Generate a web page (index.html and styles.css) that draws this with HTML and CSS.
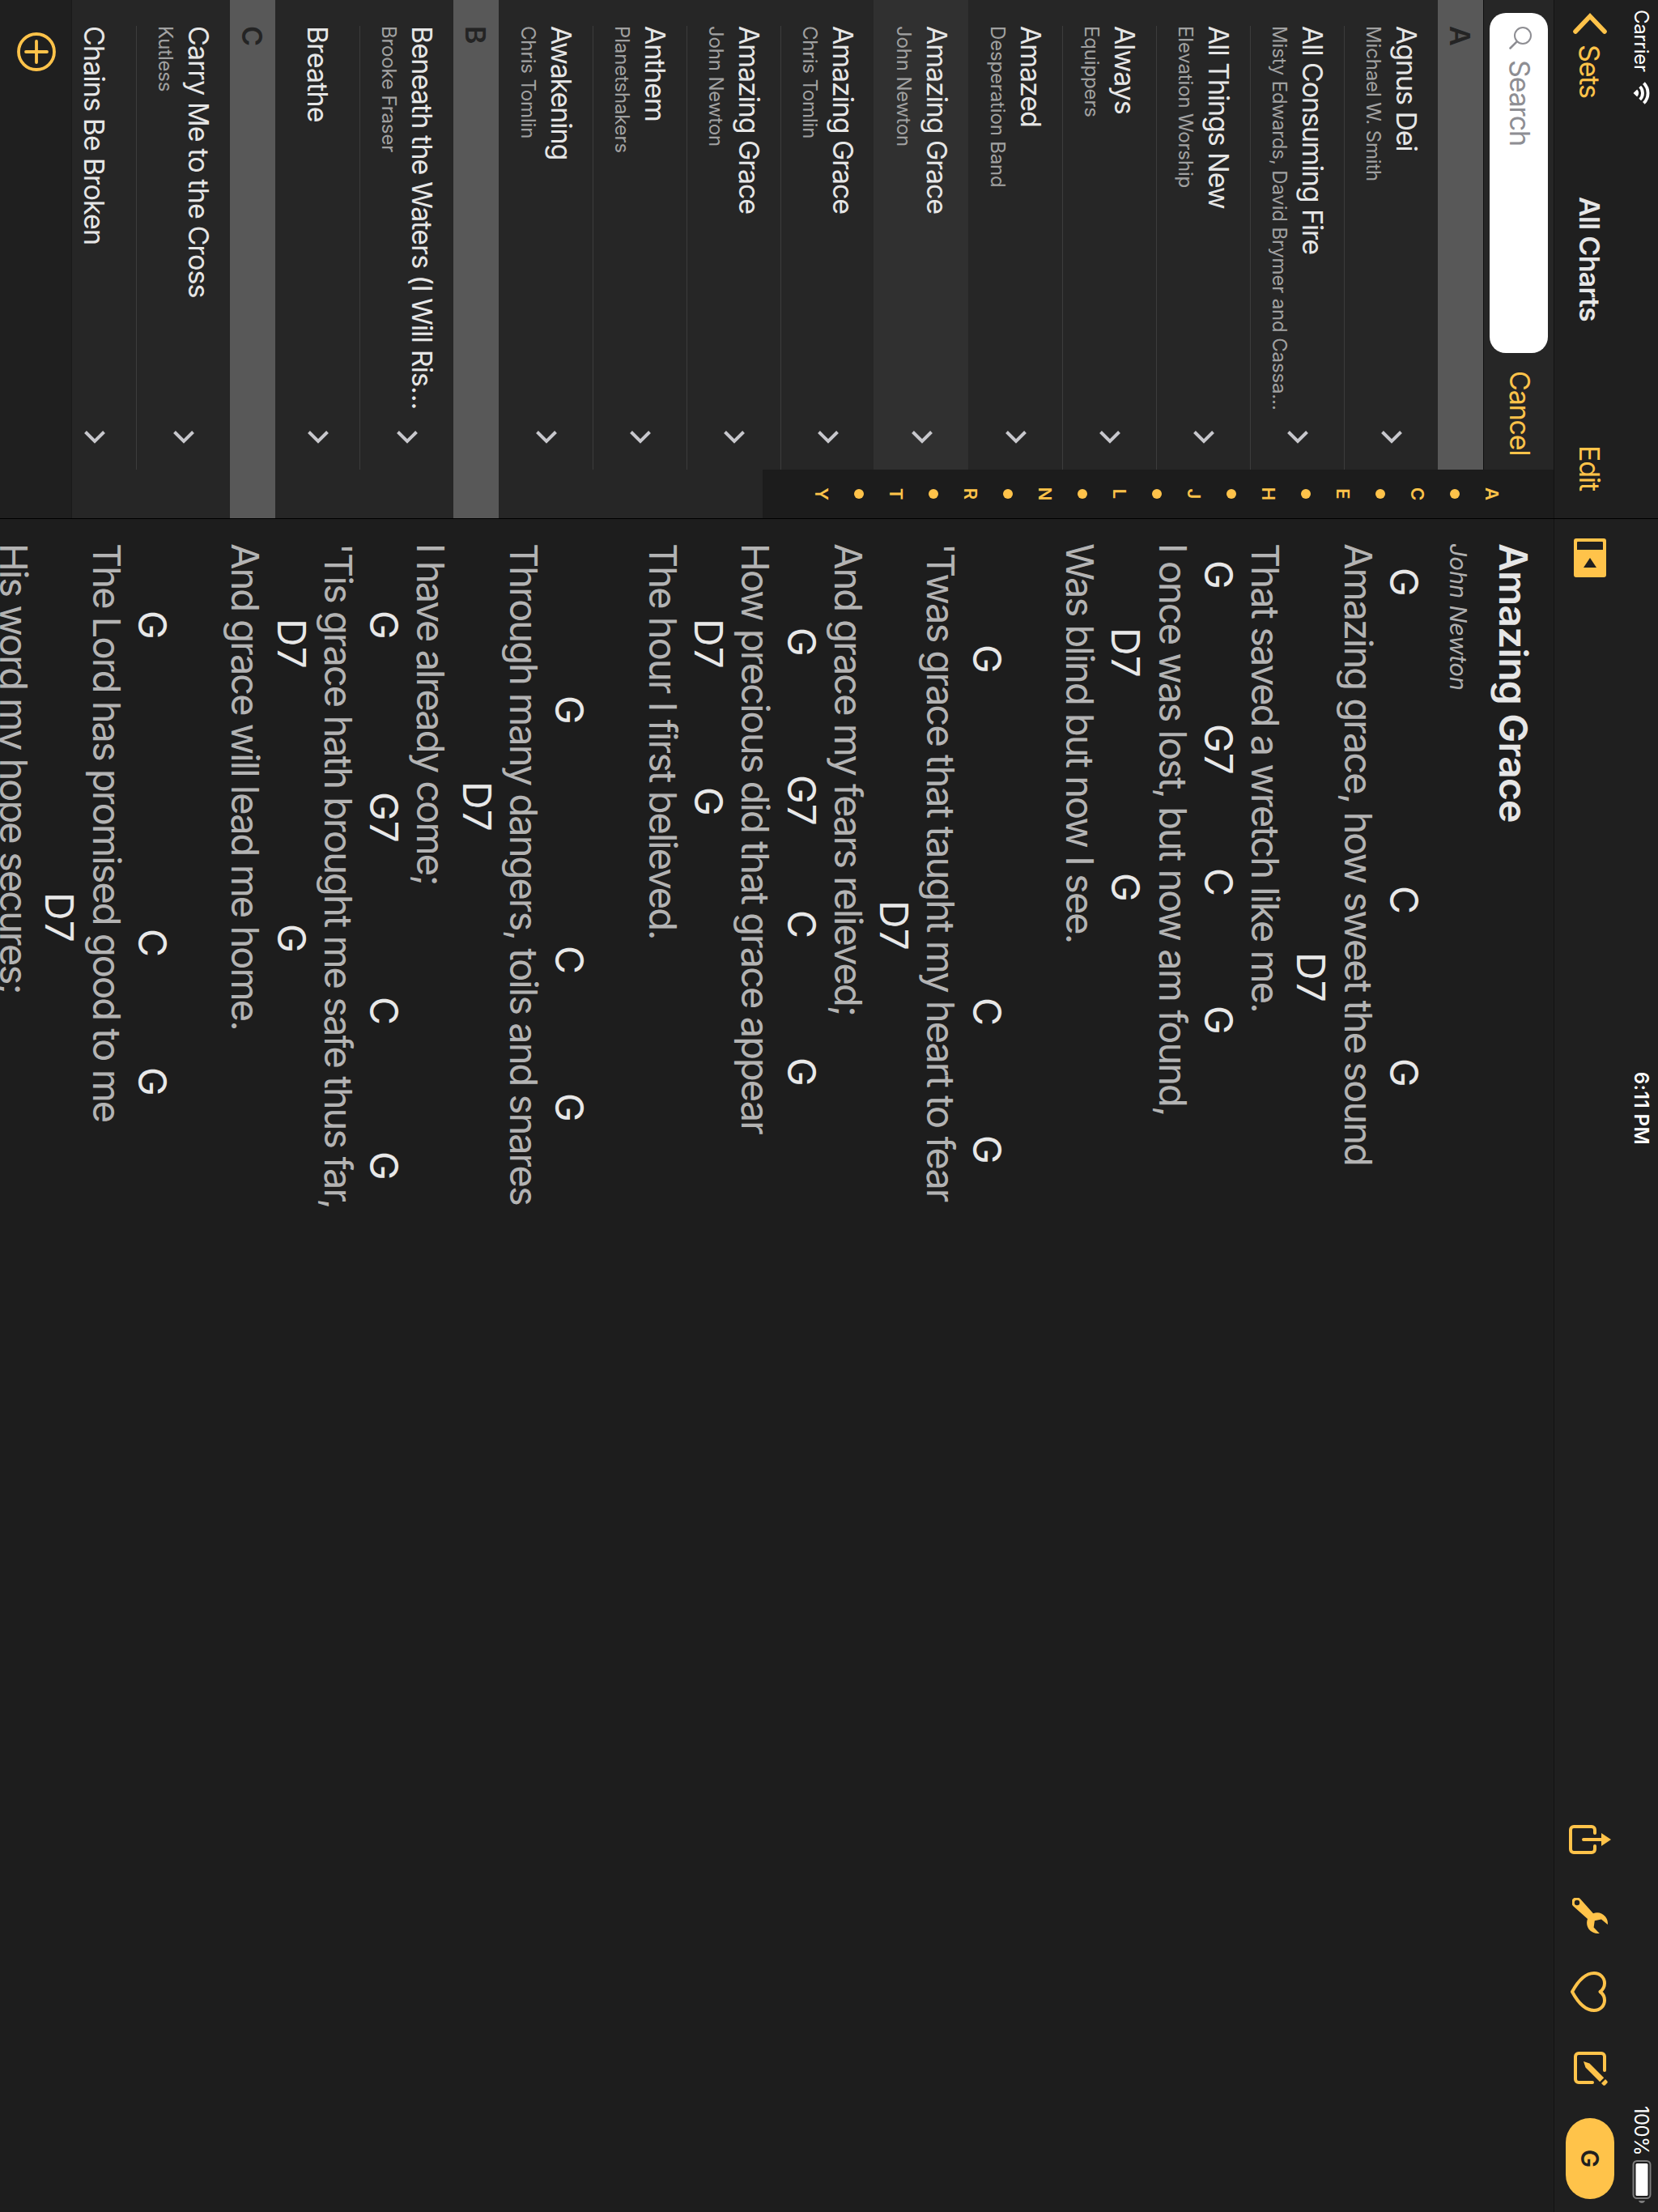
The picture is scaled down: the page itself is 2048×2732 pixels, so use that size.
FILE: index.html
```html
<!DOCTYPE html>
<html lang="en">
<head>
<meta charset="utf-8">
<title>All Charts</title>
<link rel="stylesheet" href="styles.css">
</head>
<body>
<div class="viewport">
<div class="device">

  <div class="status">
    <div class="status-left">
      <span class="carrier">Carrier</span>
      <svg class="wifi" width="28" height="21" viewBox="0 0 28 21">
        <g fill="none" stroke="#fff" stroke-width="3.8">
          <path d="M1.6 7.6a17.5 17.5 0 0 1 24.8 0"/>
          <path d="M6 12.3a11.3 11.3 0 0 1 16 0"/>
        </g>
        <path d="M14 20.5l-4.6-4.7a6.5 6.5 0 0 1 9.2 0z" fill="#fff"/>
      </svg>
    </div>
    <span class="clock">6:11 PM</span>
    <div class="status-right">
      <span class="percent">100%</span>
      <svg class="battery" width="54" height="24" viewBox="0 0 54 24">
        <rect x="1" y="1.5" width="46" height="21" rx="4.5" fill="none" stroke="#7d7d7d" stroke-width="2"/>
        <rect x="4" y="4.5" width="40" height="15" rx="1.5" fill="#fff"/>
        <path d="M50 8v8q3-1 3-4t-3-4z" fill="#7d7d7d"/>
      </svg>
    </div>
  </div>

  <aside class="sidebar">
    <header class="nav sidebar-nav">
      <a class="back">
        <svg width="28" height="44" viewBox="0 0 28 44"><path d="M24 4L5 22l19 18" fill="none" stroke="#ffc34a" stroke-width="5.6" stroke-linecap="round" stroke-linejoin="miter"/></svg>
        <span>Sets</span>
      </a>
      <h1>All Charts</h1>
      <a class="edit">Edit</a>
    </header>

    <div class="search">
      <div class="field">
        <svg width="30" height="30" viewBox="0 0 30 30"><g fill="none" stroke="#8e8e93" stroke-width="2"><circle cx="12" cy="12" r="10"/><path d="M19.3 19.3l8.2 8.2" stroke-width="2.6" stroke-linecap="round"/></g></svg>
        <span>Search</span>
      </div>
      <a class="cancel">Cancel</a>
    </div>

    <div class="list">
      <div class="section">A</div>
      <div class="row"><div class="labels"><b>Agnus Dei</b><i>Michael W. Smith</i></div><svg class="chev" viewBox="0 0 16 26"><path d="M1.5 1.5L13 13 1.5 24.500"/></svg></div>
      <div class="row"><div class="labels"><b>All Consuming Fire</b><i>Misty Edwards, David Brymer and Cassa…</i></div><svg class="chev" viewBox="0 0 16 26"><path d="M1.5 1.5L13 13 1.5 24.500"/></svg></div>
      <div class="row"><div class="labels"><b>All Things New</b><i>Elevation Worship</i></div><svg class="chev" viewBox="0 0 16 26"><path d="M1.5 1.5L13 13 1.5 24.500"/></svg></div>
      <div class="row"><div class="labels"><b>Always</b><i>Equippers</i></div><svg class="chev" viewBox="0 0 16 26"><path d="M1.5 1.5L13 13 1.5 24.500"/></svg></div>
      <div class="row last"><div class="labels"><b>Amazed</b><i>Desperation Band</i></div><svg class="chev" viewBox="0 0 16 26"><path d="M1.5 1.5L13 13 1.5 24.500"/></svg></div>
      <div class="row last selected"><div class="labels"><b>Amazing Grace</b><i>John Newton</i></div><svg class="chev" viewBox="0 0 16 26"><path d="M1.5 1.5L13 13 1.5 24.500"/></svg></div>
      <div class="row"><div class="labels"><b>Amazing Grace</b><i>Chris Tomlin</i></div><svg class="chev" viewBox="0 0 16 26"><path d="M1.5 1.5L13 13 1.5 24.500"/></svg></div>
      <div class="row"><div class="labels"><b>Amazing Grace</b><i>John Newton</i></div><svg class="chev" viewBox="0 0 16 26"><path d="M1.5 1.5L13 13 1.5 24.500"/></svg></div>
      <div class="row"><div class="labels"><b>Anthem</b><i>Planetshakers</i></div><svg class="chev" viewBox="0 0 16 26"><path d="M1.5 1.5L13 13 1.5 24.500"/></svg></div>
      <div class="row last"><div class="labels"><b>Awakening</b><i>Chris Tomlin</i></div><svg class="chev" viewBox="0 0 16 26"><path d="M1.5 1.5L13 13 1.5 24.500"/></svg></div>
      <div class="section">B</div>
      <div class="row long"><div class="labels"><b>Beneath the Waters (I Will Ris…</b><i>Brooke Fraser</i></div><svg class="chev" viewBox="0 0 16 26"><path d="M1.5 1.5L13 13 1.5 24.500"/></svg></div>
      <div class="row short last"><div class="labels"><b>Breathe</b></div><svg class="chev" viewBox="0 0 16 26"><path d="M1.5 1.5L13 13 1.5 24.500"/></svg></div>
      <div class="section">C</div>
      <div class="row long"><div class="labels"><b>Carry Me to the Cross</b><i>Kutless</i></div><svg class="chev" viewBox="0 0 16 26"><path d="M1.5 1.5L13 13 1.5 24.500"/></svg></div>
      <div class="row short last"><div class="labels"><b>Chains Be Broken</b></div><svg class="chev" viewBox="0 0 16 26"><path d="M1.5 1.5L13 13 1.5 24.500"/></svg></div>
    </div>

    <footer class="toolbar">
      <svg width="48" height="48" viewBox="0 0 48 48"><g fill="none" stroke="#ffc34a" stroke-width="3.800" stroke-linecap="round"><circle cx="24" cy="24" r="22"/><path d="M24 11v26M11 24h26"/></g></svg>
    </footer>

    <div class="index">
      <span>A</span><u></u><span>C</span><u></u><span>E</span><u></u><span>H</span><u></u><span>J</span><u></u><span>L</span><u></u><span>N</span><u></u><span>R</span><u></u><span>T</span><u></u><span>Y</span>
    </div>
  </aside>

  <main class="main">
    <header class="nav main-nav">
      <svg width="48" height="40" viewBox="0 0 48 40">
        <path fill="#ffc34a" fill-rule="evenodd" d="M3 0h42a3 3 0 0 1 3 3v34a3 3 0 0 1-3 3H3a3 3 0 0 1-3-3V3a3 3 0 0 1 3-3zM5 4a1 1 0 0 0-1 1v30a1 1 0 0 0 1 1h9V4zM24 20l12 8V12z"/>
      </svg>
      <div class="tools">
        <svg class="share" width="36" height="52" viewBox="0 0 36 52">
          <path fill="none" stroke="#ffc34a" stroke-width="4" stroke-linecap="round" d="M10 20H6a4 4 0 0 0-4 4v22a4 4 0 0 0 4 4h24a4 4 0 0 0 4-4V24a4 4 0 0 0-4-4h-4M18 10v24"/>
          <path fill="#ffc34a" d="M18 0l8 12H10z"/>
        </svg>
        <svg class="wrench" width="44" height="44" viewBox="0 0 44 44">
          <path fill="#ffc34a" fill-rule="evenodd" d="M33 .2C30 -.3 26 .5 23 3.200C18.600 7 17.200 12.500 19.200 18L1.800 33.600a6.200 6.200 0 1 0 8.600 8.800L26 25c5.500 2 11 .6 14.700-3.600 2.800-3.200 3.700-7.600 3.200-11.200L36.400 17.400 28.300 16.200 26.600 8zM6 34.800a3.200 3.200 0 1 1 0 6.400 3.200 3.200 0 0 1 0-6.400z"/>
        </svg>
        <svg class="heart" width="50" height="44" viewBox="0 0 50 44">
          <path fill="none" stroke="#ffc34a" stroke-width="4" stroke-linejoin="round" d="M25 7.500C22.500 4 18.500 2 14.500 2 7.500 2 2 7.500 2 15c0 11.500 11 20.500 23 27 12-6.500 23-15.500 23-27C48 7.500 42.500 2 35.500 2 31.500 2 27.500 4 25 7.500z"/>
        </svg>
        <svg class="compose" width="44" height="44" viewBox="0 0 44 44">
          <path fill="none" stroke="#ffc34a" stroke-width="4" stroke-linecap="round" d="M23 6H6a4 4 0 0 0-4 4v28a4 4 0 0 0 4 4h28a4 4 0 0 0 4-4V21"/>
          <path fill="#ffc34a" d="M12 32l2.500-7.500L32.200 6.800l5 5L19.500 29.500zM34 5l2.200-2.200q1.300-1.300 2.600 0l2.400 2.400q1.300 1.300 0 2.600L39 10z"/>
        </svg>
        <div class="key">G</div>
      </div>
    </header>

    <article class="chart">
      <h2>Amazing Grace</h2>
      <p class="artist">John Newton</p>

      <section class="verse">
        <div class="chords"><span style="--x:30px">G</span><span style="--x:423px">C</span><span style="--x:636px">G</span></div>
        <p>Amazing grace, how sweet the sound</p>
        <div class="chords"><span style="--x:505px">D7</span></div>
        <p>That saved a wretch like me.</p>
        <div class="chords"><span style="--x:21px">G</span><span style="--x:223px">G7</span><span style="--x:401px">C</span><span style="--x:571px">G</span></div>
        <p>I once was lost, but now am found,</p>
        <div class="chords"><span style="--x:104px">D7</span><span style="--x:407px">G</span></div>
        <p>Was blind but now I see.</p>
      </section>

      <section class="verse">
        <div class="chords"><span style="--x:125px">G</span><span style="--x:561px">C</span><span style="--x:731px">G</span></div>
        <p>'Twas grace that taught my heart to fear</p>
        <div class="chords"><span style="--x:441px">D7</span></div>
        <p>And grace my fears relieved;</p>
        <div class="chords"><span style="--x:104px">G</span><span style="--x:286px">G7</span><span style="--x:453px">C</span><span style="--x:635px">G</span></div>
        <p>How precious did that grace appear</p>
        <div class="chords"><span style="--x:93px">D7</span><span style="--x:301px">G</span></div>
        <p>The hour I first believed.</p>
      </section>

      <section class="verse">
        <div class="chords"><span style="--x:188px">G</span><span style="--x:497px">C</span><span style="--x:679px">G</span></div>
        <p>Through many dangers, toils and snares</p>
        <div class="chords"><span style="--x:294px">D7</span></div>
        <p>I have already come;</p>
        <div class="chords"><span style="--x:83px">G</span><span style="--x:307px">G7</span><span style="--x:560px">C</span><span style="--x:751px">G</span></div>
        <p>'Tis grace hath brought me safe thus far,</p>
        <div class="chords"><span style="--x:93px">D7</span><span style="--x:470px">G</span></div>
        <p>And grace will lead me home.</p>
      </section>

      <section class="verse">
        <div class="chords"><span style="--x:83px">G</span><span style="--x:476px">C</span><span style="--x:647px">G</span></div>
        <p>The Lord has promised good to me</p>
        <div class="chords"><span style="--x:431px">D7</span></div>
        <p>His word my hope secures;</p>
      </section>
    </article>
  </main>
</div>
</div>
</body>
</html>
```
FILE: styles.css
```css
* { box-sizing: border-box; margin: 0; padding: 0; }

body {
  background: #1d1d1d;
  font-family: Inter, "Liberation Sans", sans-serif;
  color: #e6e6e6;
}

.viewport { width: 2048px; height: 2732px; overflow: hidden; }

/* landscape screen, turned a quarter clockwise */
.device {
  position: relative;
  display: flex;
  width: 2732px;
  height: 2048px;
  overflow: hidden;
  background: #1d1d1d;
  transform-origin: 0 0;
  transform: translateX(2048px) rotate(90deg);
}

svg { display: block; flex: none; }

/* status bar, floats over both panes */
.status {
  position: absolute;
  inset: 0 0 auto 0;
  z-index: 3;
  display: grid;
  grid-template-columns: 1fr auto 1fr;
  height: 40px;
  padding: 6px 10px 0 12px;
  font-size: 24px;
  line-height: 29px;
  color: #fff;
}
.status-left { display: flex; }
.carrier { letter-spacing: -0.27px; }
.wifi { margin: 4px 0 0 12px; }
.clock { font-weight: 600; letter-spacing: 0.5px; padding-left: 4px; }
.status-right { display: flex; justify-content: flex-end; }
.percent { letter-spacing: -0.6px; }
.battery { margin: 2px 0 0 6px; }

.nav {
  height: 129px;
  padding-top: 40px;
  background: #1f1f1f;
  border-bottom: 1px solid #131313;
}

/* sidebar */
.sidebar {
  position: relative;
  flex: none;
  display: flex;
  flex-direction: column;
  width: 641px;
  border-right: 1px solid #000;
  background: #262626;
}
.sidebar-nav {
  flex: none;
  display: grid;
  grid-template-columns: 1fr auto 1fr;
  align-items: center;
  padding-left: 15px;
  padding-right: 34px;
  font-size: 34px;
  line-height: 41px;
}
.sidebar-nav h1 { font-size: 34px; font-weight: 600; letter-spacing: -0.7px; padding-left: 19px; }
.back, .edit, .cancel { color: #ffc34a; letter-spacing: -1.15px; }
.back { display: flex; align-items: center; gap: 12px; }
.edit { text-align: right; }

.search {
  flex: none;
  display: flex;
  align-items: center;
  height: 87px;
  padding: 0 0 0 16px;
  border-bottom: 1px solid #101010;
  font-size: 34px;
  line-height: 41px;
}
.field {
  display: flex;
  align-items: center;
  width: 420px;
  height: 72px;
  padding: 0 16px 4px;
  border-radius: 20px;
  background: #fff;
  color: #8e8e93;
  letter-spacing: -1.15px;
}
.field span { margin-left: 12px; }
.cancel { padding: 0 0 4px 22px; }

.list { flex: 1; min-height: 0; overflow: hidden; }
.section {
  height: 56px;
  padding: 8px 32px 0;
  background: #585858;
  color: #242424;
  font-size: 34px;
  font-weight: 600;
  line-height: 41px;
}
.row {
  display: flex;
  align-items: flex-start;
  justify-content: space-between;
  height: 116px;
  margin: 0 60px 0 32px;
  padding: 18px 32px 0 0;
  border-bottom: 1px solid #3c3c3c;
}
.row.last { border-bottom-color: transparent; }
.row.selected { margin-left: 0; padding-left: 32px; background: #303030; height: 117px; margin-bottom: -1px; border: 0; }
.row.short { height: 104px; padding-top: 31px; }
.labels b, .labels i { display: block; font-style: normal; font-weight: 400; white-space: nowrap; }
.labels b { font-size: 34px; line-height: 41px; letter-spacing: -1.1px; }
.row.long b, .row.short b { letter-spacing: -0.88px; }
.labels i { margin-top: 6px; font-size: 24px; line-height: 29px; letter-spacing: -0.16px; color: #a1a1a1; }
.chev { width: 16px; height: 26px; margin-top: 26px; fill: none; stroke: #c7c7cc; stroke-width: 4; }
.row.short .chev { margin-top: 7px; }

.toolbar {
  flex: none;
  height: 89px;
  padding: 19px 40px 0;
  border-top: 1px solid #1a1a1a;
  background: #1f1f1f;
}

/* A–Y jump strip over the right edge of the list */
.index {
  position: absolute;
  top: 129px;
  right: 0;
  display: flex;
  flex-direction: column;
  align-items: center;
  width: 60px;
  height: 977px;
  padding-top: 53px;
  background: #1c1c1c;
  color: #ffc34a;
  font-size: 22px;
  font-weight: 600;
  line-height: 46px;
}
.index span { height: 46px; }
.index u { width: 12px; height: 12px; margin: 17px 0; border-radius: 50%; background: #ffc34a; }

/* main pane */
.main { flex: 1; min-width: 0; }
.main-nav {
  display: flex;
  justify-content: space-between;
  align-items: center;
  padding-left: 24px;
  padding-right: 16px;
}
.tools { display: flex; align-items: center; }
.share { margin-right: 54px; }
.wrench { margin-right: 47px; }
.heart { margin: 4px 49px 0 0; }
.compose { margin: -4px 38px 0 0; }
.key {
  width: 100px;
  height: 60px;
  border-radius: 30px;
  background: #ffc34a;
  color: #1f1f1f;
  font-size: 30px;
  font-weight: 600;
  line-height: 60px;
  text-align: center;
}

.chart { padding: 21px 0 0 30px; white-space: nowrap; }
.chart h2 { font-size: 48px; font-weight: 600; line-height: 58px; letter-spacing: -0.83px; }
.artist {
  margin: 21px 0 20px;
  font-size: 29px;
  font-style: italic;
  line-height: 35px;
  letter-spacing: 0;
  color: #b0b0b0;
}
.verse { margin-bottom: 57.28px; line-height: 57.28px; }
.verse p { height: 57.28px; font-size: 47px; letter-spacing: -1.97px; color: #b3b3b3; }
.chords { display: grid; height: 57.28px; padding-top: 1px; font-size: 48px; color: #e8e8e8; }
.chords span { grid-area: 1 / 1; margin-left: var(--x); }
```
